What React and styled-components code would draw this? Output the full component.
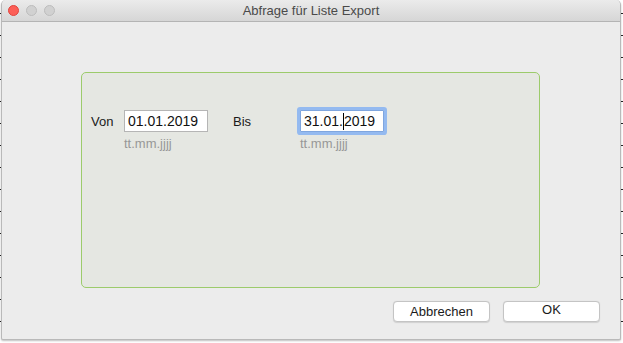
import React from "react";
import styled, { createGlobalStyle } from "styled-components";

const GlobalStyle = createGlobalStyle`
    html, body {
        margin: 0;
        padding: 0;
    }
    body {
        width: 623px;
        height: 343px;
        overflow: hidden;
        font-family: "Liberation Sans", Arial, sans-serif;
        background: #ffffff;
    }
    #root {
        position: relative;
    }
`;

// little ruler ticks peeking out behind the window
const Ticks = styled.div`
    position: absolute;
    top: 13px;
    ${(p) => (p.side === "left" ? "left: 0;" : "left: 621px;")}
    width: 2px;
    height: 330px;
    background: repeating-linear-gradient(
        to bottom,
        #222 0px,
        #222 1px,
        transparent 1px,
        transparent 22px
    );
`;

const Window = styled.div`
    position: relative;
    margin-left: 1px;
    width: 620px;
    height: 340px;
    display: flex;
    flex-direction: column;
    background: #ececec;
    border: 1px solid #b9b9b9;
    border-top: none;
    border-radius: 5px 5px 2px 2px;
    box-sizing: border-box;
    box-shadow: 0 1px 2px rgba(0, 0, 0, 0.25);
    overflow: hidden;
`;

const TitleBar = styled.div`
    position: relative;
    height: 22px;
    flex: none;
    display: flex;
    align-items: center;
    justify-content: center;
    background: linear-gradient(#ebebeb, #d6d6d6);
    border-bottom: 1px solid #b4b4b4;
    box-sizing: border-box;
`;

const Lights = styled.div`
    position: absolute;
    left: 6px;
    top: 5px;
    display: flex;
    gap: 7px;
`;

const Light = styled.span`
    width: 11px;
    height: 11px;
    border-radius: 50%;
    box-sizing: border-box;
    background: ${(p) => (p.red ? "#fc5f57" : "#d1d1d1")};
    border: 1px solid ${(p) => (p.red ? "#e0443e" : "#bcbcbc")};
`;

const Title = styled.div`
    font-size: 13px;
    color: #4a4a4a;
    margin-top: -1px;
`;

const Content = styled.div`
    flex: 1;
    display: flex;
    flex-direction: column;
    padding: 50px 20px 0 79px;
`;

const Panel = styled.div`
    width: 459px;
    height: 216px;
    box-sizing: border-box;
    border: 1px solid #9ccb6b;
    border-radius: 5px;
    background: #e5e7e2;
    padding: 36px 0 0 9px;
`;

const FieldRow = styled.div`
    display: flex;
    align-items: flex-start;
`;

const Label = styled.div`
    width: ${(p) => p.w}px;
    margin-left: ${(p) => p.ml || 0}px;
    font-size: 13px;
    color: #1a1a1a;
    line-height: 22px;
    margin-top: 2px;
`;

const FieldCol = styled.div`
    display: flex;
    flex-direction: column;
`;

const TextBox = styled.div`
    width: 84px;
    height: 22px;
    box-sizing: border-box;
    margin-top: 1px;
    padding: 0 0 0 3px;
    background: #fff;
    border: 1px solid #b5b5b5;
    font-size: 14px;
    line-height: 20px;
    color: #111;
    display: flex;
    align-items: center;
    ${(p) =>
        p.focused &&
        `
        border-color: #7fa6df;
        box-shadow: 0 0 0 3px #94baf0;
        border-radius: 1px;
    `}
`;

const Caret = styled.span`
    display: inline-block;
    width: 1px;
    height: 17px;
    background: #000;
`;

const Hint = styled.div`
    font-size: 13px;
    color: #979797;
    margin-top: 4px;
`;

const ButtonRow = styled.div`
    display: flex;
    justify-content: flex-end;
    gap: 13px;
    margin-top: 13px;
`;

const Button = styled.button`
    width: 97px;
    height: 21px;
    padding: 0 0 ${(p) => p.lift || 0}px;
    background: #fff;
    border: 1px solid #c4c4c4;
    border-radius: 4px;
    box-shadow: 0 0.5px 1px rgba(0, 0, 0, 0.12);
    font-family: "Liberation Sans", Arial, sans-serif;
    font-size: 13px;
    color: #1a1a1a;
    line-height: 1;
`;

export default function App() {
    return (
        <>
            <GlobalStyle />
            <Ticks side="left" />
            <Ticks side="right" />
            <Window>
                <TitleBar>
                    <Lights>
                        <Light red />
                        <Light />
                        <Light />
                    </Lights>
                    <Title>Abfrage für Liste Export</Title>
                </TitleBar>
                <Content>
                    <Panel>
                        <FieldRow>
                            <Label w={33}>Von</Label>
                            <FieldCol>
                                <TextBox>01.01.2019</TextBox>
                                <Hint>tt.mm.jjjj</Hint>
                            </FieldCol>
                            <Label w={67} ml={25}>Bis</Label>
                            <FieldCol>
                                <TextBox focused>
                                    31.01.<Caret />2019
                                </TextBox>
                                <Hint>tt.mm.jjjj</Hint>
                            </FieldCol>
                        </FieldRow>
                    </Panel>
                    <ButtonRow>
                        <Button>Abbrechen</Button>
                        <Button lift={4}>OK</Button>
                    </ButtonRow>
                </Content>
            </Window>
        </>
    );
}
